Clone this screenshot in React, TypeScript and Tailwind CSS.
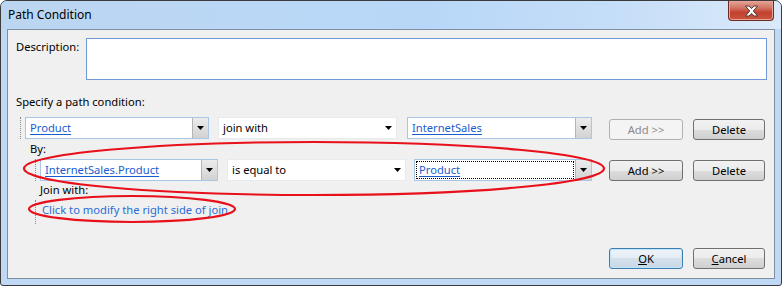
import React from "react";

// Small black dropdown triangle
const Arrow = () => (
  <svg width="7" height="4" viewBox="0 0 7 4">
    <path d="M0 0h7L3.5 4z" fill="#000" />
  </svg>
);

type ComboProps = {
  w: string;
  value: string;
  link?: boolean;
  plain?: boolean;
  focused?: boolean;
};

const Combo = ({ w, value, link, plain, focused }: ComboProps) => (
  <div
    className={`${w} h-[22px] flex bg-white border ${
      plain ? "border-[#e6ebf0]" : "border-[#a9c6e6]"
    }`}
  >
    <div className="flex-1 flex items-center p-[1px]">
      <div
        className={`flex-1 h-full flex items-center pl-[2px] ${
          focused ? "border border-dotted border-black" : "border border-transparent"
        }`}
      >
        <span
          className={
            link ? "text-[#1a5ccf] underline underline-offset-2" : "text-black"
          }
        >
          {value}
        </span>
      </div>
    </div>
    {plain ? (
      <div className="w-[16px] flex items-center justify-center">
        <Arrow />
      </div>
    ) : (
      <div className="w-[16px] flex items-center justify-center border-l border-[#b4b4b4] bg-[linear-gradient(#ececec,#d2d2d2)]">
        <Arrow />
      </div>
    )}
  </div>
);

type BtnProps = {
  w: string;
  children: React.ReactNode;
  disabled?: boolean;
  primary?: boolean;
};

const Btn = ({ w, children, disabled, primary }: BtnProps) => {
  let look =
    "border-[#707070] text-black bg-[linear-gradient(#f2f2f2_0%,#ebebeb_50%,#dddddd_50%,#cfcfcf_100%)]";
  if (disabled) look = "border-[#adb2b5] text-[#8a8a8a] bg-[#f4f4f4]";
  if (primary)
    look =
      "border-[#3c7fb1] text-black bg-[linear-gradient(#eef4f9_0%,#e4edf5_50%,#d4e1ec_50%,#c9d8e6_100%)] shadow-[inset_0_0_0_1px_#bfe3f8]";
  return (
    <div
      className={`${w} h-[21px] rounded-[3px] border flex items-center justify-center ${look}`}
    >
      {children}
    </div>
  );
};

const Dots = ({ h }: { h: string }) => (
  <div className={`${h} w-0 border-l border-dotted border-[#8a8a8a]`} />
);

export default function App() {
  return (
    <div
      className="w-[782px] h-[286px] flex flex-col border border-[#3b3b3b] rounded-t-[7px] rounded-b-[3px] overflow-hidden bg-[#bfd9f5] text-[11.2px] leading-[16px] text-black"
      style={{ fontFamily: '"Noto Sans", "Open Sans", sans-serif' }}
    >
      {/* Title bar */}
      <div className="h-[28px] flex items-start bg-[linear-gradient(90deg,#bcd6f1_0%,#b8d7f8_55%,#c6def8_80%,#dbeafa_100%)]">
        <div className="pl-[7px] pt-[6px] text-[12px] leading-[16px] text-black">Path Condition</div>
        <div className="ml-auto mr-[7px] w-[46px] h-[20px] rounded-b-[4px] border border-t-0 border-[#6b2c24] flex items-center justify-center bg-[linear-gradient(#e3a597_0%,#d27666_35%,#c2412f_60%,#c8563f_100%)] shadow-[inset_0_0_0_1px_#e9a295]">
          <svg width="15" height="12" viewBox="0 0 15 12">
            <path
              d="M1.5 1h3.5l2.5 2.6L10 1h3.5l-4.2 5 4.2 5H10L7.5 8.4 5 11H1.5l4.2-5z"
              fill="#fff"
              stroke="#4a3a3a"
              strokeWidth="1"
              strokeLinejoin="round"
            />
          </svg>
        </div>
      </div>

      {/* Client area */}
      <div className="relative flex-1 mx-[6px] mb-[6px] border border-[#7f8fa4] bg-[#f0f0f0] flex flex-col">
        {/* Description */}
        <div className="flex mt-[8px] pl-[8px]">
          <div className="w-[70px] pt-[1px]">Description:</div>
          <div className="w-[681px] h-[42px] bg-white border border-[#6f9ad6]" />
        </div>

        <div className="mt-[14px] pl-[8px]">Specify a path condition:</div>

        {/* Row 1 */}
        <div className="flex items-start mt-[7px] pl-[12px] h-[23px]">
          <Dots h="h-[22px]" />
          <div className="ml-[4px]">
            <Combo w="w-[184px]" value="Product" link />
          </div>
          <div className="ml-[9px]">
            <Combo w="w-[179px]" value="join with" plain />
          </div>
          <div className="ml-[10px]">
            <Combo w="w-[185px]" value="InternetSales" link />
          </div>
          <div className="ml-[17px] mt-[2px]">
            <Btn w="w-[74px]" disabled>
              Add &gt;&gt;
            </Btn>
          </div>
          <div className="ml-[10px] mt-[2px]">
            <Btn w="w-[72px]">Delete</Btn>
          </div>
        </div>

        <div className="mt-[1px] pl-[22px]">By:</div>

        {/* Row 2 */}
        <div className="flex items-start mt-[2px] pl-[27px] h-[22px]">
          <Dots h="h-[22px]" />
          <div className="ml-[4px]">
            <Combo w="w-[178px]" value="InternetSales.Product" link />
          </div>
          <div className="ml-[9px]">
            <Combo w="w-[179px]" value="is equal to" plain />
          </div>
          <div className="ml-[8px]">
            <Combo w="w-[178px]" value="Product" link focused />
          </div>
          <div className="ml-[17px] mt-[1px]">
            <Btn w="w-[74px]">Add &gt;&gt;</Btn>
          </div>
          <div className="ml-[10px] mt-[1px]">
            <Btn w="w-[72px]">Delete</Btn>
          </div>
        </div>

        <div className="mt-[1px] pl-[32px]">Join with:</div>

        <div className="flex items-start mt-[2px] pl-[27px] h-[24px]">
          <Dots h="h-[24px]" />
          <div className="ml-[6px] pt-[2px] text-[#2a6cd6]">
            Click to modify the right side of join
          </div>
        </div>

        {/* OK / Cancel */}
        <div className="mt-auto mb-[9px] flex pl-[601px]">
          <Btn w="w-[74px]" primary>
            <span className="underline">O</span>K
          </Btn>
          <div className="ml-[10px]">
            <Btn w="w-[72px]">
              <span className="underline">C</span>ancel
            </Btn>
          </div>
        </div>

        {/* Red annotation ellipses drawn over the dialog */}
        <svg
          className="absolute left-[-8px] top-[-30px] pointer-events-none"
          width="782"
          height="286"
          viewBox="0 0 782 286"
        >
          <ellipse cx="314" cy="168.5" rx="290" ry="26.5" fill="none" stroke="#e8101a" strokeWidth="2.2" />
          <ellipse cx="132" cy="209" rx="103" ry="13" fill="none" stroke="#e8101a" strokeWidth="2.2" />
        </svg>
      </div>
    </div>
  );
}
